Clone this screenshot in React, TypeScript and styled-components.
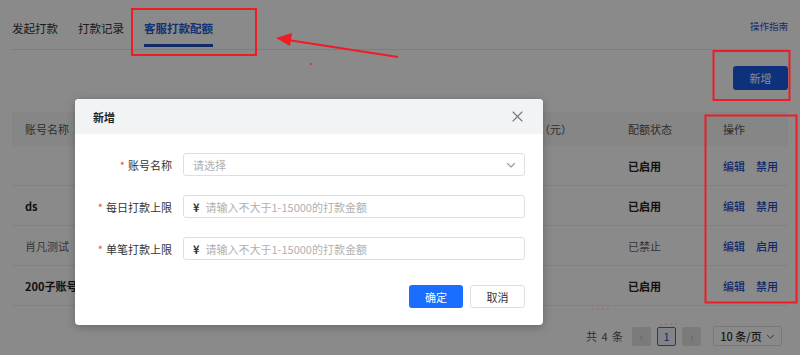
import styled, { createGlobalStyle } from "styled-components";

const GlobalStyle = createGlobalStyle`
    * { box-sizing: border-box; }
    body {
        margin: 0;
        font-family: "Noto Sans CJK SC", "Noto Sans", sans-serif;
        color: #333;
    }
`;

type Row = {
    name: string;
    nameBold: boolean;
    status: string;
    enabled: boolean;
};

const rows: Row[] = [
    {name: "", nameBold: false, status: "已启用", enabled: true},
    {name: "ds", nameBold: true, status: "已启用", enabled: true},
    {name: "肖凡测试", nameBold: false, status: "已禁止", enabled: false},
    {name: "200子账号", nameBold: true, status: "已启用", enabled: true},
];

const ChevronDown = ({size = 10, color = "#999"}: { size?: number; color?: string }) => (
    <svg width={size} height={size} viewBox="0 0 10 10" fill="none">
        <path d="M1.5 3.5 L5 7 L8.5 3.5" stroke={color} strokeWidth="1.1" strokeLinecap="round" strokeLinejoin="round"/>
    </svg>
);

const CloseIcon = () => (
    <svg width="11" height="11" viewBox="0 0 11 11" fill="none">
        <path d="M1 1 L10 10 M10 1 L1 10" stroke="#777" strokeWidth="1.1" strokeLinecap="round"/>
    </svg>
);

export default function App() {
    return (
        <>
            <GlobalStyle/>
            <Page>
                <TabBar>
                    <Tabs>
                        <Tab>发起打款</Tab>
                        <Tab>打款记录</Tab>
                        <Tab active>客服打款配额</Tab>
                    </Tabs>
                    <Guide>操作指南</Guide>
                </TabBar>

                <Toolbar>
                    <PrimaryButton>新增</PrimaryButton>
                </Toolbar>

                <Table>
                    <HeadRow>
                        <Cell>账号名称</Cell>
                        <Cell>每日打款上限（元）</Cell>
                        <Cell>单笔打款上限（元）</Cell>
                        <Cell>配额状态</Cell>
                        <Cell>操作</Cell>
                    </HeadRow>
                    {rows.map((r, i) => (
                        <BodyRow key={i}>
                            <Cell bold={r.nameBold} muted={!r.nameBold}>{r.name}</Cell>
                            <Cell/>
                            <Cell/>
                            <Cell bold={r.enabled} muted={!r.enabled}>{r.status}</Cell>
                            <Cell>
                                <Ops>
                                    <OpLink>编辑</OpLink>
                                    <OpLink>{r.enabled ? "禁用" : "启用"}</OpLink>
                                </Ops>
                            </Cell>
                        </BodyRow>
                    ))}
                </Table>

                <Pager>
                    <Total>共 4 条</Total>
                    <PageBtn disabled>‹</PageBtn>
                    <PageBtn current>1</PageBtn>
                    <PageBtn disabled>›</PageBtn>
                    <SizeSelect>10 条/页 <ChevronDown size={9} color="#666"/></SizeSelect>
                </Pager>

                <Mask/>

                <Annotations width="800" height="355" viewBox="0 0 800 355">
                    <rect x="132" y="9" width="124" height="46" fill="none" stroke="#ee1d25" strokeWidth="2"/>
                    <rect x="713.5" y="51" width="76" height="49" fill="none" stroke="#ee1d25" strokeWidth="2"/>
                    <rect x="705.5" y="115.5" width="91" height="187" fill="none" stroke="#ee1d25" strokeWidth="2"/>
                    <line x1="398" y1="57" x2="288" y2="40" stroke="#ee1d25" strokeWidth="2"/>
                    <polygon points="276,38 292,33 290,46" fill="#ee1d25"/>
                    <circle cx="311" cy="64" r="1" fill="#ee1d25"/>
                    <line x1="592" y1="309" x2="610" y2="309" stroke="#ee1d25" strokeWidth="0.8" strokeDasharray="2 3" opacity="0.5"/>
                    <line x1="660" y1="325" x2="680" y2="323" stroke="#ee1d25" strokeWidth="0.8" strokeDasharray="2 3" opacity="0.5"/>
                </Annotations>

                <Modal>
                    <ModalHeader>
                        <ModalTitle>新增</ModalTitle>
                        <CloseIcon/>
                    </ModalHeader>
                    <ModalBody>
                        <FormRow>
                            <Label><Star>*</Star>账号名称</Label>
                            <Field>
                                <Placeholder>请选择</Placeholder>
                                <ChevronDown size={10} color="#999"/>
                            </Field>
                        </FormRow>
                        <FormRow>
                            <Label><Star>*</Star>每日打款上限</Label>
                            <Field>
                                <Yen>¥</Yen>
                                <Placeholder>请输入不大于1-15000的打款金额</Placeholder>
                            </Field>
                        </FormRow>
                        <FormRow>
                            <Label><Star>*</Star>单笔打款上限</Label>
                            <Field>
                                <Yen>¥</Yen>
                                <Placeholder>请输入不大于1-15000的打款金额</Placeholder>
                            </Field>
                        </FormRow>
                        <Footer>
                            <ConfirmButton>确定</ConfirmButton>
                            <CancelButton>取消</CancelButton>
                        </Footer>
                    </ModalBody>
                </Modal>
            </Page>
        </>
    );
}

const Page = styled.div`
    position: relative;
    width: 800px;
    height: 355px;
    overflow: hidden;
    background: #fff;
    padding: 0 12px;
`;

const TabBar = styled.div`
    display: flex;
    justify-content: space-between;
    align-items: flex-start;
    height: 50px;
    border-bottom: 1px solid #e8e8e8;
`;

const Tabs = styled.div`
    display: flex;
    gap: 20px;
`;

const Tab = styled.div<{ active?: boolean }>`
    padding-top: 19px;
    height: 47px;
    font-size: 11.5px;
    line-height: 18px;
    font-weight: ${p => (p.active ? 700 : 400)};
    color: ${p => (p.active ? "#1f5bd8" : "#333")};
    border-bottom: 3px solid ${p => (p.active ? "#1f4fb8" : "transparent")};
`;

const Guide = styled.div`
    padding-top: 18px;
    font-size: 9.5px;
    line-height: 16px;
    color: #1f4fc8;
`;

const Toolbar = styled.div`
    display: flex;
    justify-content: flex-end;
    padding-top: 16px;
`;

const PrimaryButton = styled.div`
    width: 55px;
    height: 24px;
    border-radius: 3px;
    background: #1a5ce6;
    color: #fff;
    font-size: 11px;
    display: flex;
    align-items: center;
    justify-content: center;
`;

const Table = styled.div`
    margin-top: 22px;
`;

const gridCols = "238px 210px 155px 95px 1fr";

const HeadRow = styled.div`
    display: grid;
    grid-template-columns: ${gridCols};
    height: 34px;
    align-items: center;
    background: #f7f8fa;
    font-size: 11px;
    color: #555;
`;

const BodyRow = styled.div`
    display: grid;
    grid-template-columns: ${gridCols};
    height: 40px;
    align-items: center;
    border-bottom: 1px solid #ececec;
    font-size: 11px;
`;

const Cell = styled.div<{ bold?: boolean; muted?: boolean }>`
    padding-left: 13px;
    white-space: nowrap;
    font-weight: ${p => (p.bold ? 700 : 400)};
    color: ${p => (p.bold ? "#222" : p.muted ? "#666" : "inherit")};
`;

const Ops = styled.div`
    display: flex;
    gap: 11px;
`;

const OpLink = styled.span`
    color: #1f4fc8;
    font-weight: 500;
`;

const Pager = styled.div`
    display: flex;
    justify-content: flex-end;
    align-items: center;
    gap: 6px;
    margin-top: 20px;
    padding-right: 6px;
    font-size: 11px;
`;

const Total = styled.span`
    color: #555;
    margin-right: 3px;
    word-spacing: 2px;
`;

const PageBtn = styled.div<{ disabled?: boolean; current?: boolean }>`
    width: 19px;
    height: 19px;
    border-radius: 2px;
    display: flex;
    align-items: center;
    justify-content: center;
    font-size: ${p => (p.current ? "11px" : "14px")};
    color: ${p => (p.current ? "#1f4fc8" : "#bbb")};
    background: ${p => (p.disabled ? "#e4e4e4" : "#f0f4ff")};
    border: 1px solid ${p => (p.current ? "#3a6fe0" : "#e4e4e4")};
`;

const SizeSelect = styled.div`
    margin-left: 6px;
    height: 20px;
    width: 69px;
    border: 1px solid #e0e0e0;
    border-radius: 2px;
    display: flex;
    align-items: center;
    justify-content: center;
    gap: 4px;
    color: #333;
    font-weight: 500;
`;

const Mask = styled.div`
    position: absolute;
    inset: 0;
    background: rgba(0, 0, 0, 0.46);
`;

const Annotations = styled.svg`
    position: absolute;
    left: 0;
    top: 0;
`;

const Modal = styled.div`
    position: absolute;
    left: 75px;
    top: 99px;
    width: 468px;
    height: 226px;
    background: #fff;
    border-radius: 4px;
    overflow: hidden;
    box-shadow: 0 2px 8px rgba(0, 0, 0, 0.25);
`;

const ModalHeader = styled.div`
    height: 35px;
    background: #f2f3f5;
    display: flex;
    align-items: center;
    justify-content: space-between;
    padding: 0 20px 0 18px;
`;

const ModalTitle = styled.div`
    font-size: 11px;
    font-weight: 700;
    color: #222;
`;

const ModalBody = styled.div`
    padding: 19px 18px 0 0;
    display: flex;
    flex-direction: column;
    gap: 19px;
`;

const FormRow = styled.div`
    display: flex;
    align-items: center;
    gap: 11px;
`;

const Label = styled.div`
    width: 97px;
    text-align: right;
    font-size: 11px;
    color: #333;
`;

const Star = styled.span`
    color: #f04b4b;
    margin-right: 3px;
`;

const Field = styled.div`
    flex: 1;
    height: 23px;
    border: 1px solid #dcdfe6;
    border-radius: 3px;
    display: flex;
    align-items: center;
    padding: 0 8px 0 9px;
    font-size: 11px;
    gap: 6px;

    & > span:last-child {
        flex: 1;
    }
    & > svg {
        margin-left: auto;
    }
`;

const Yen = styled.span`
    color: #333;
    font-weight: 700;
`;

const Placeholder = styled.span`
    color: #b0b0b0;
`;

const Footer = styled.div`
    display: flex;
    justify-content: flex-end;
    gap: 7px;
    margin-top: 6px;
`;

const ConfirmButton = styled.div`
    width: 54px;
    height: 23px;
    border-radius: 3px;
    background: #1a6dff;
    color: #fff;
    font-size: 11px;
    display: flex;
    align-items: center;
    justify-content: center;
`;

const CancelButton = styled.div`
    width: 55px;
    height: 23px;
    border-radius: 3px;
    border: 1px solid #dcdfe6;
    background: #fff;
    color: #333;
    font-size: 11px;
    display: flex;
    align-items: center;
    justify-content: center;
`;
